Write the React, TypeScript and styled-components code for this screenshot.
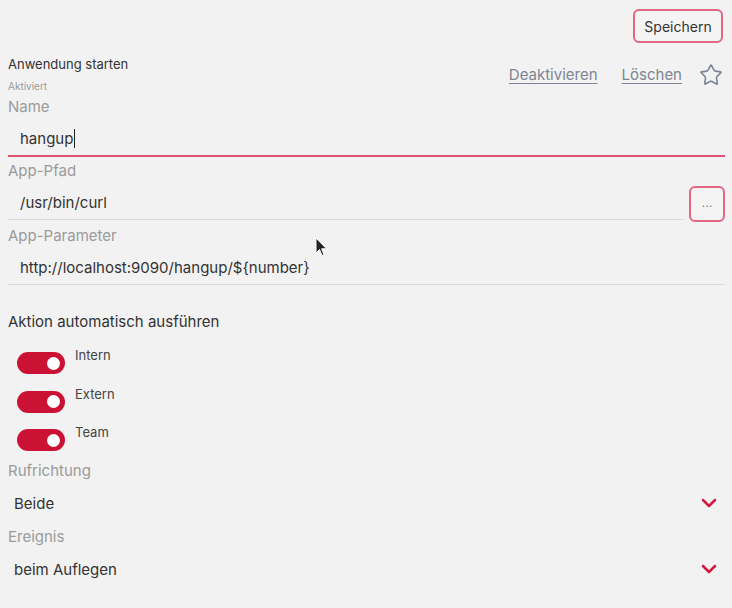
import React from 'react';
import styled, { createGlobalStyle } from 'styled-components';
import { ChevronDown, Star } from 'lucide-react';

const GlobalStyle = createGlobalStyle`
    html, body {
        margin: 0;
        padding: 0;
        background: #f2f2f2;
    }

    body {
        font-family: Inter, 'Noto Sans', sans-serif;
        color: #333;
    }
`;

const toggles = ['Intern', 'Extern', 'Team'];

function App() {
    return (
        <Page>
            <GlobalStyle />
            <TopBar>
                <OutlineButton>Speichern</OutlineButton>
            </TopBar>
            <Header>
                <TitleBlock>
                    <Title>Anwendung starten</Title>
                    <Subtitle>Aktiviert</Subtitle>
                </TitleBlock>
                <Actions>
                    <LinkButton>Deaktivieren</LinkButton>
                    <LinkButton>Löschen</LinkButton>
                    <Star size={24} strokeWidth={1.6} color="#7d8594" />
                </Actions>
            </Header>

            <Field>
                <Label>Name</Label>
                <Value focused>
                    hangup
                    <Caret />
                </Value>
            </Field>

            <Field>
                <Label>App-Pfad</Label>
                <InputRow>
                    <Value>/usr/bin/curl</Value>
                    <BrowseButton>...</BrowseButton>
                </InputRow>
            </Field>

            <Field>
                <Label>App-Parameter</Label>
                <Value>http://localhost:9090/hangup/${'{number}'}</Value>
                <Pointer viewBox="0 0 12 20">
                    <path d="M1 1 L1 16 L4.5 12.5 L7 18.5 L9 17.6 L6.6 11.8 L11.5 11.8 Z" fill="#222" stroke="#fff" strokeWidth="1" />
                </Pointer>
            </Field>

            <SectionTitle>Aktion automatisch ausführen</SectionTitle>
            <ToggleList>
                {toggles.map(t => (
                    <ToggleRow key={t}>
                        <Switch on={true}>
                            <Knob />
                        </Switch>
                        <ToggleLabel>{t}</ToggleLabel>
                    </ToggleRow>
                ))}
            </ToggleList>

            <SelectGroup>
                <SelectField>
                    <Label>Rufrichtung</Label>
                    <Select>
                        <span>Beide</span>
                        <ChevronDown size={24} strokeWidth={2.5} color="#d3173f" />
                    </Select>
                </SelectField>
                <SelectField>
                    <Label>Ereignis</Label>
                    <Select>
                        <span>beim Auflegen</span>
                        <ChevronDown size={24} strokeWidth={2.5} color="#d3173f" />
                    </Select>
                </SelectField>
            </SelectGroup>
        </Page>
    );
}

const Page = styled.div`
    width: 732px;
    height: 608px;
    box-sizing: border-box;
    padding: 9px 7px 0 8px;
    display: flex;
    flex-direction: column;
    overflow: hidden;
`;

const TopBar = styled.div`
    display: flex;
    justify-content: flex-end;
    padding-right: 2px;
`;

const OutlineButton = styled.button`
    height: 34px;
    width: 90px;
    padding: 0;
    border: 2px solid #e36783;
    border-radius: 6px;
    background: #f4f4f4;
    font-family: Inter, sans-serif;
    font-size: 14px;
    color: #333;
`;

const Header = styled.div`
    margin-top: 14px;
    display: flex;
    justify-content: space-between;
    align-items: flex-start;
`;

const TitleBlock = styled.div`
    display: flex;
    flex-direction: column;
    gap: 7px;
`;

const Title = styled.span`
    font-size: 13px;
    line-height: 15px;
`;

const Subtitle = styled.span`
    font-size: 10px;
    line-height: 14px;
    color: #9a9a9a;
`;

const Actions = styled.div`
    display: flex;
    align-items: center;
    margin-top: 6px;
    padding-right: 2px;

    svg {
        margin-left: 17px;
    }
`;

const LinkButton = styled.span`
    font-size: 15px;
    line-height: 22px;
    color: #7d8594;
    text-decoration: underline;
    text-underline-offset: 3px;
    margin-left: 24px;
`;

const Field = styled.div`
    position: relative;
    margin-top: 4px;
    display: flex;
    flex-direction: column;
`;

const Label = styled.div`
    font-size: 15px;
    line-height: 20px;
    color: #9a9a9a;
    margin-bottom: 4px;
`;

const Value = styled.div<{ focused?: boolean }>`
    flex: 1 1 auto;
    height: 34px;
    padding-left: 12px;
    display: flex;
    align-items: center;
    font-size: 15px;
    color: #333;
    border-bottom: ${props => (props.focused ? '2px solid #e05574' : '1px solid #dcdcdc')};
`;

const Caret = styled.span`
    width: 1px;
    height: 19px;
    background: #222;
    margin-left: 1px;
`;

const InputRow = styled.div`
    display: flex;
    align-items: flex-start;
    gap: 5px;
`;

const BrowseButton = styled.button`
    flex: none;
    width: 36px;
    height: 36px;
    margin-top: 1px;
    padding: 0 0 4px;
    border: 2px solid #e36783;
    border-radius: 6px;
    background: #f4f4f4;
    font-size: 13px;
    color: #777;
`;

const Pointer = styled.svg`
    position: absolute;
    left: 307px;
    top: 11px;
    width: 12px;
    height: 20px;
`;

const SectionTitle = styled.div`
    margin-top: 27px;
    font-size: 15px;
    line-height: 20px;
    color: #333;
`;

const ToggleList = styled.div`
    margin-top: 15px;
    display: flex;
    flex-direction: column;
    gap: 11.5px;
`;

const ToggleRow = styled.div`
    display: flex;
    align-items: flex-start;
    padding-left: 9px;
`;

const Switch = styled.div<{ on: boolean }>`
    width: 48px;
    height: 22px;
    margin-top: 5px;
    border-radius: 11px;
    background: ${props => (props.on ? '#cb1235' : '#bbb')};
    display: flex;
    align-items: center;
    justify-content: ${props => (props.on ? 'flex-end' : 'flex-start')};
    padding: 0 5px;
    box-sizing: border-box;
`;

const Knob = styled.div`
    width: 13px;
    height: 13px;
    border-radius: 50%;
    background: #fff;
`;

const ToggleLabel = styled.span`
    margin-left: 10px;
    font-size: 13px;
    line-height: 16px;
    color: #444;
`;

const SelectGroup = styled.div`
    margin-top: 10px;
    display: flex;
    flex-direction: column;
    gap: 6px;
`;

const SelectField = styled.div`
    display: flex;
    flex-direction: column;
`;

const Select = styled.div`
    height: 36px;
    padding-left: 6px;
    padding-right: 4px;
    display: flex;
    align-items: center;
    justify-content: space-between;
    font-size: 15px;
    color: #333;
`;

export default App;
